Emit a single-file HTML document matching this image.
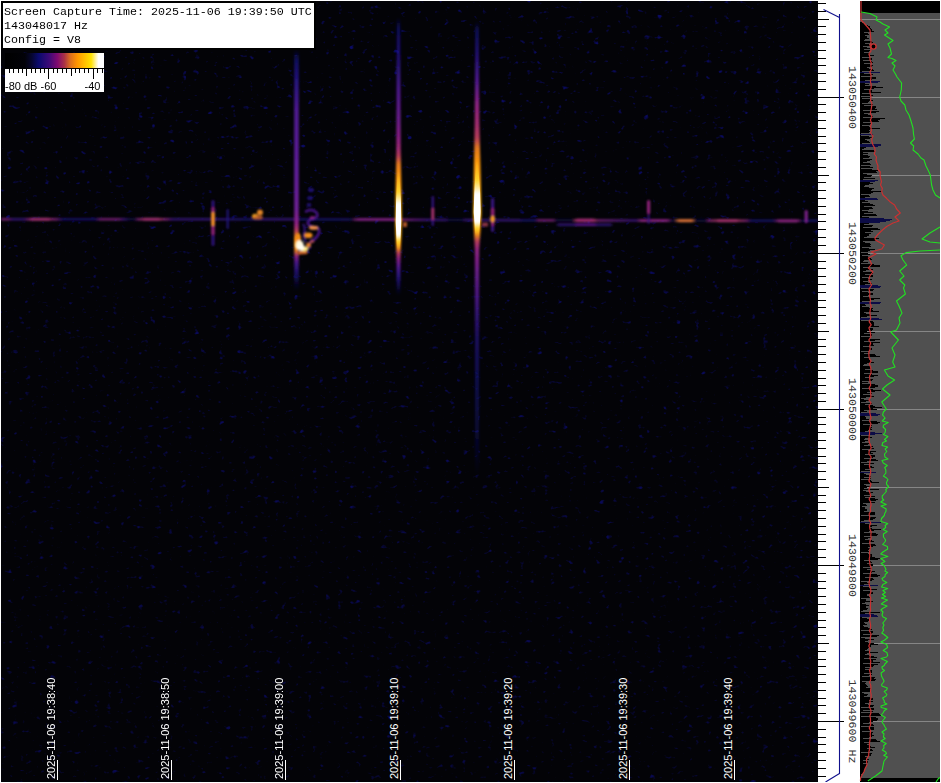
<!DOCTYPE html>
<html lang="en"><head><meta charset="utf-8"><title>Spectrogram capture</title>
<style>
html,body{margin:0;padding:0;background:#fff;}
body{width:941px;height:783px;overflow:hidden;position:relative;}
svg{position:absolute;left:0;top:0;display:block;}
.mono{font-family:"Liberation Mono","Courier New",monospace;font-size:11.67px;fill:#000;}
.sans{font-family:"Liberation Sans",Arial,sans-serif;font-size:11px;}
</style></head><body>
<svg width="941" height="783" viewBox="0 0 941 783">
<defs>
<filter id="noise" x="0" y="0" width="100%" height="100%" color-interpolation-filters="sRGB">
<feTurbulence type="fractalNoise" baseFrequency="0.16 0.2" numOctaves="2" seed="11" result="t"/>
<feColorMatrix in="t" type="matrix" values="0 0 0 0 0.04  0 0 0 0 0.04  0 0 0 0 0.4  5 0 0 0 -3.38"/>
</filter>
<filter id="b1" x="-50%" y="-5%" width="200%" height="110%"><feGaussianBlur stdDeviation="1.1 1.5"/></filter>
<filter id="b2" x="-50%" y="-20%" width="200%" height="140%"><feGaussianBlur stdDeviation="0.9"/></filter>
<filter id="b4" x="-50%" y="-20%" width="200%" height="140%"><feGaussianBlur stdDeviation="0.55 0.9"/></filter>
<filter id="b3" x="-20%" y="-100%" width="140%" height="300%"><feGaussianBlur stdDeviation="1.4 0.8"/></filter>
<linearGradient id="fade" x1="0" y1="0" x2="0" y2="1"><stop offset="0" stop-color="#030307" stop-opacity="0"/><stop offset="0.45" stop-color="#030307" stop-opacity="0.15"/><stop offset="1" stop-color="#030307" stop-opacity="0.25"/></linearGradient>
<linearGradient id="cbar" x1="0" y1="0" x2="1" y2="0"><stop offset="0" stop-color="#000000"/><stop offset="0.2" stop-color="#020208"/><stop offset="0.27" stop-color="#060630"/><stop offset="0.34" stop-color="#0a0a6e"/><stop offset="0.445" stop-color="#3c0a78"/><stop offset="0.53" stop-color="#800a70"/><stop offset="0.6" stop-color="#aa3246"/><stop offset="0.66" stop-color="#dc6e1e"/><stop offset="0.73" stop-color="#ff9600"/><stop offset="0.87" stop-color="#ffe100"/><stop offset="0.92" stop-color="#fff4b0"/><stop offset="0.945" stop-color="#ffffff"/><stop offset="1" stop-color="#ffffff"/></linearGradient>
<linearGradient id="s1" gradientUnits="userSpaceOnUse" x1="0" y1="50" x2="0" y2="290"><stop offset="0.0000" stop-color="#14148a" stop-opacity="0"/><stop offset="0.0417" stop-color="#14148a" stop-opacity="0.65"/><stop offset="0.1250" stop-color="#2a1490" stop-opacity="0.85"/><stop offset="0.2500" stop-color="#521a96" stop-opacity="0.95"/><stop offset="0.5000" stop-color="#5e1e98" stop-opacity="1"/><stop offset="0.6667" stop-color="#6c2092" stop-opacity="1"/><stop offset="0.7250" stop-color="#8c2080" stop-opacity="1"/><stop offset="0.7542" stop-color="#b43c58" stop-opacity="1"/><stop offset="0.7750" stop-color="#e07820" stop-opacity="1"/><stop offset="0.8000" stop-color="#ff9a08" stop-opacity="1"/><stop offset="0.8375" stop-color="#e07820" stop-opacity="1"/><stop offset="0.8583" stop-color="#8c2080" stop-opacity="0.95"/><stop offset="0.8833" stop-color="#521a96" stop-opacity="0.9"/><stop offset="0.9250" stop-color="#2a1490" stop-opacity="0.7"/><stop offset="1.0000" stop-color="#14148a" stop-opacity="0"/></linearGradient>
<linearGradient id="s2" gradientUnits="userSpaceOnUse" x1="0" y1="18" x2="0" y2="295"><stop offset="0.0000" stop-color="#14148a" stop-opacity="0"/><stop offset="0.0361" stop-color="#14148a" stop-opacity="0.6"/><stop offset="0.1516" stop-color="#2a1490" stop-opacity="0.75"/><stop offset="0.2599" stop-color="#521a96" stop-opacity="0.9"/><stop offset="0.3755" stop-color="#6c1c88" stop-opacity="1"/><stop offset="0.4404" stop-color="#8c2080" stop-opacity="1"/><stop offset="0.4765" stop-color="#a02c6c" stop-opacity="1"/><stop offset="0.4982" stop-color="#b43c58" stop-opacity="1"/><stop offset="0.5271" stop-color="#e07820" stop-opacity="1"/><stop offset="0.5921" stop-color="#ff9a08" stop-opacity="1"/><stop offset="0.6751" stop-color="#ffb010" stop-opacity="1"/><stop offset="0.7870" stop-color="#ffb010" stop-opacity="1"/><stop offset="0.8123" stop-color="#ff9a08" stop-opacity="1"/><stop offset="0.8339" stop-color="#e07820" stop-opacity="1"/><stop offset="0.8484" stop-color="#b43c58" stop-opacity="1"/><stop offset="0.8664" stop-color="#8c2080" stop-opacity="1"/><stop offset="0.8989" stop-color="#521a96" stop-opacity="0.95"/><stop offset="0.9386" stop-color="#2a1490" stop-opacity="0.8"/><stop offset="1.0000" stop-color="#14148a" stop-opacity="0"/></linearGradient>
<linearGradient id="c2" gradientUnits="userSpaceOnUse" x1="0" y1="170" x2="0" y2="250"><stop offset="0.0000" stop-color="#ffd830" stop-opacity="0"/><stop offset="0.2750" stop-color="#ffd830" stop-opacity="0.9"/><stop offset="0.4250" stop-color="#ffffff" stop-opacity="1"/><stop offset="0.8125" stop-color="#ffffff" stop-opacity="1"/><stop offset="0.8875" stop-color="#ffd830" stop-opacity="0.9"/><stop offset="1.0000" stop-color="#ffd830" stop-opacity="0"/></linearGradient>
<linearGradient id="s3" gradientUnits="userSpaceOnUse" x1="0" y1="22" x2="0" y2="475"><stop offset="0.0000" stop-color="#14148a" stop-opacity="0"/><stop offset="0.0177" stop-color="#14148a" stop-opacity="0.6"/><stop offset="0.0728" stop-color="#2a1490" stop-opacity="0.75"/><stop offset="0.1280" stop-color="#521a96" stop-opacity="0.9"/><stop offset="0.1832" stop-color="#8c2080" stop-opacity="1"/><stop offset="0.2274" stop-color="#a02c6c" stop-opacity="1"/><stop offset="0.2561" stop-color="#b43c58" stop-opacity="1"/><stop offset="0.2781" stop-color="#e07820" stop-opacity="1"/><stop offset="0.3157" stop-color="#ff9a08" stop-opacity="1"/><stop offset="0.3819" stop-color="#ffb010" stop-opacity="1"/><stop offset="0.4459" stop-color="#ffb010" stop-opacity="1"/><stop offset="0.4592" stop-color="#ff9a08" stop-opacity="1"/><stop offset="0.4724" stop-color="#e07820" stop-opacity="1"/><stop offset="0.4834" stop-color="#b43c58" stop-opacity="1"/><stop offset="0.5033" stop-color="#8c2080" stop-opacity="1"/><stop offset="0.5519" stop-color="#6a1c88" stop-opacity="0.95"/><stop offset="0.6137" stop-color="#521a96" stop-opacity="0.8"/><stop offset="0.6909" stop-color="#2a1490" stop-opacity="0.62"/><stop offset="0.8124" stop-color="#14148a" stop-opacity="0.48"/><stop offset="0.9227" stop-color="#14148a" stop-opacity="0.28"/><stop offset="1.0000" stop-color="#14148a" stop-opacity="0"/></linearGradient>
<linearGradient id="c3" gradientUnits="userSpaceOnUse" x1="0" y1="160" x2="0" y2="236"><stop offset="0.0000" stop-color="#ffd830" stop-opacity="0"/><stop offset="0.2632" stop-color="#ffd830" stop-opacity="0.9"/><stop offset="0.4474" stop-color="#ffffff" stop-opacity="1"/><stop offset="0.8158" stop-color="#ffffff" stop-opacity="1"/><stop offset="0.8947" stop-color="#ffd830" stop-opacity="0.9"/><stop offset="1.0000" stop-color="#ffd830" stop-opacity="0"/></linearGradient>
<linearGradient id="lg" gradientUnits="userSpaceOnUse" x1="1" y1="0" x2="818" y2="0"><stop offset="0.0000" stop-color="#862282"/><stop offset="0.0086" stop-color="#862282"/><stop offset="0.0135" stop-color="#3a1684"/><stop offset="0.0282" stop-color="#3a1684"/><stop offset="0.0330" stop-color="#862282"/><stop offset="0.0404" stop-color="#b03a6a"/><stop offset="0.0551" stop-color="#b03a6a"/><stop offset="0.0673" stop-color="#862282"/><stop offset="0.0747" stop-color="#1a1070"/><stop offset="0.1163" stop-color="#1a1070"/><stop offset="0.1212" stop-color="#862282"/><stop offset="0.1432" stop-color="#862282"/><stop offset="0.1506" stop-color="#3a1684"/><stop offset="0.1579" stop-color="#0c0a40"/><stop offset="0.1640" stop-color="#0c0a40"/><stop offset="0.1677" stop-color="#862282"/><stop offset="0.1750" stop-color="#b03a6a"/><stop offset="0.1946" stop-color="#b03a6a"/><stop offset="0.2032" stop-color="#862282"/><stop offset="0.2093" stop-color="#3a1684"/><stop offset="0.2534" stop-color="#3a1684"/><stop offset="0.3011" stop-color="#1a1070"/><stop offset="0.3231" stop-color="#3a1684"/><stop offset="0.3586" stop-color="#3a1684"/><stop offset="0.3660" stop-color="#1a1070"/><stop offset="0.3917" stop-color="#1a1070"/><stop offset="0.4259" stop-color="#1a1070"/><stop offset="0.4296" stop-color="#0c0a40"/><stop offset="0.4333" stop-color="#862282"/><stop offset="0.4835" stop-color="#862282"/><stop offset="0.4908" stop-color="#862282"/><stop offset="0.5251" stop-color="#3a1684"/><stop offset="0.5447" stop-color="#3a1684"/><stop offset="0.5483" stop-color="#0c0a40"/><stop offset="0.5643" stop-color="#0c0a40"/><stop offset="0.5679" stop-color="#3a1684"/><stop offset="0.6340" stop-color="#3a1684"/><stop offset="0.6377" stop-color="#1a1070"/><stop offset="0.6548" stop-color="#1a1070"/><stop offset="0.6573" stop-color="#862282"/><stop offset="0.6756" stop-color="#862282"/><stop offset="0.6793" stop-color="#0c0a40"/><stop offset="0.7001" stop-color="#0c0a40"/><stop offset="0.7026" stop-color="#b03a6a"/><stop offset="0.7271" stop-color="#b03a6a"/><stop offset="0.7307" stop-color="#862282"/><stop offset="0.7772" stop-color="#3a1684"/><stop offset="0.7821" stop-color="#862282"/><stop offset="0.8176" stop-color="#862282"/><stop offset="0.8201" stop-color="#0c0a40"/><stop offset="0.8250" stop-color="#0c0a40"/><stop offset="0.8274" stop-color="#e0703a"/><stop offset="0.8470" stop-color="#e0703a"/><stop offset="0.8494" stop-color="#0c0a40"/><stop offset="0.8629" stop-color="#0c0a40"/><stop offset="0.8654" stop-color="#862282"/><stop offset="0.8764" stop-color="#b03a6a"/><stop offset="0.9021" stop-color="#b03a6a"/><stop offset="0.9131" stop-color="#862282"/><stop offset="0.9168" stop-color="#1a1070"/><stop offset="0.9461" stop-color="#1a1070"/><stop offset="0.9498" stop-color="#862282"/><stop offset="0.9767" stop-color="#862282"/><stop offset="0.9792" stop-color="#0c0a40"/><stop offset="0.9878" stop-color="#1a1070"/><stop offset="1.0000" stop-color="#1a1070"/></linearGradient>
</defs>
<rect x="0" y="0" width="941" height="783" fill="#fff"/>
<rect x="1" y="1" width="817" height="781" fill="#030307"/>
<rect x="1" y="1" width="817" height="781" filter="url(#noise)"/>
<rect x="1" y="1" width="817" height="781" fill="url(#fade)"/>
<g filter="url(#b3)">
<path d="M1 219.5 L300 219.5 L520 220.4 L818 221 L818 218.5 L520 217.9 L300 217 L1 217 Z" transform="translate(0,1.1)" fill="url(#lg)" opacity="0.8"/>
<rect x="30" y="217.8" width="20" height="3" rx="1.2" fill="#a02c74" opacity="0.78"/>
<rect x="143" y="217.8" width="17" height="3" rx="1.2" fill="#a02c74" opacity="0.78"/>
<rect x="357" y="218.0" width="39" height="2.8" rx="1.2" fill="#7c2080" opacity="0.78"/>
<rect x="576" y="218.60000000000002" width="19" height="3.4" rx="1.2" fill="#a42a76" opacity="0.78"/>
<rect x="640" y="219.2" width="28" height="2.8" rx="1.2" fill="#8c2280" opacity="0.78"/>
<rect x="678" y="219.2" width="15" height="3" rx="1.2" fill="#e67838" opacity="0.78"/>
<rect x="717" y="219.3" width="21" height="3" rx="1.2" fill="#a83070" opacity="0.78"/>
<rect x="778" y="219.6" width="20" height="2.8" rx="1.2" fill="#8c2280" opacity="0.78"/>
<rect x="557" y="223.6" width="55" height="2.4" rx="1" fill="#34147e" opacity="0.85"/>
<rect x="575" y="223.6" width="21" height="2.4" rx="1" fill="#5c1a88" opacity="0.9"/>
</g>
<g filter="url(#b1)">
<rect x="294.2" y="50" width="4.6" height="240" fill="url(#s1)"/>
<path d="M396.8 18 L400.2 18 L400.7 150 L401.6 200 L401.8 225 L401 245 L400.5 258 L400.4 295 L396.6 295 L396.5 258 L396 245 L395.2 225 L395.4 200 L396.3 150 Z" fill="url(#s2)"/>
<path d="M475.3 22 L478.7 22 L479.3 120 L481 190 L481.4 213 L480.4 232 L479.2 250 L479 475 L475 475 L474.8 250 L474 232 L473.1 213 L473.5 190 L474.7 120 Z" fill="url(#s3)"/>
</g>
<g filter="url(#b4)">
<path d="M397.6 170 L399.4 170 L400.9 200 L401.3 222 L400 250 L397 250 L395.7 222 L396.1 200 Z" fill="url(#c2)"/>
<path d="M476.2 160 L477.8 160 L480.1 192 L480.7 212 L479 236 L475.4 236 L473.7 212 L474.3 192 Z" fill="url(#c3)"/>
</g>
<g filter="url(#b2)">
<path d="M305 212 q6 -4 11 0 q4 5 -3 7 q-6 1 -5 5 q4 4 9 3 q4 3 1 8 q-3 5 -7 6 q-3 4 -1 8" fill="none" stroke="#4a168c" stroke-width="2.6" opacity="0.95"/>
<path d="M303 224 q3 4 1 9 q-1 5 2 9" fill="none" stroke="#3a148a" stroke-width="2.2" opacity="0.85"/>
<path d="M310 217.5 q3 1 4 -1" fill="none" stroke="#8c2080" stroke-width="2.4"/>
<ellipse cx="311" cy="190" rx="3" ry="2" fill="#24148a" opacity="0.85"/>
<ellipse cx="310" cy="198" rx="3" ry="2" fill="#24148a" opacity="0.8"/>
<ellipse cx="309" cy="205" rx="2.5" ry="2" fill="#24148a" opacity="0.8"/>
<ellipse cx="313.5" cy="227.8" rx="4.6" ry="2" fill="#e88a48"/>
<ellipse cx="308.3" cy="235.2" rx="4.2" ry="2.8" fill="#f08c1c"/>
<ellipse cx="308.5" cy="245" rx="2.6" ry="2.2" fill="#e07a24"/>
<ellipse cx="312" cy="241.5" rx="2.2" ry="1.6" fill="#b04a50"/>
<ellipse cx="298.2" cy="240" rx="2.8" ry="7" fill="#f08c14"/>
<path d="M298 251 L308 251.5 L307 254 L298 254.5 Z" fill="#d8682c"/>
<ellipse cx="299.5" cy="245.3" rx="4.2" ry="5" fill="#fff8dc"/>
<ellipse cx="304" cy="248.8" rx="4.2" ry="2.6" fill="#ffe680"/>
<ellipse cx="301" cy="247.5" rx="3.4" ry="3" fill="#fffdf0"/>
<rect x="211.5" y="200" width="3" height="46" rx="1.5" fill="#30127e" opacity="0.95"/>
<rect x="211.3" y="207" width="3.4" height="28" rx="1.5" fill="#8c2070"/>
<rect x="211.2" y="212" width="3.6" height="14" rx="1.5" fill="#f09020"/>
<rect x="226.5" y="209" width="2.4" height="20" rx="1" fill="#20107a" opacity="0.9"/>
<ellipse cx="255" cy="216.5" rx="3" ry="2.8" fill="#f0a020"/>
<ellipse cx="260" cy="212.5" rx="3" ry="3" fill="#e08428"/>
<ellipse cx="258" cy="217.5" rx="5" ry="2" fill="#c0602c" opacity="0.9"/>
<rect x="403" y="222" width="4" height="5" fill="#c0602c" opacity="0.9"/>
<rect x="431.5" y="196" width="2.6" height="30" rx="1" fill="#30127e" opacity="0.9"/>
<rect x="431.3" y="208" width="3" height="12" rx="1" fill="#a03068"/>
<rect x="491" y="198" width="3.2" height="34" rx="1.5" fill="#3a1482" opacity="0.95"/>
<rect x="490.8" y="208" width="3.6" height="18" rx="1.5" fill="#8c2070"/>
<ellipse cx="492.6" cy="219" rx="2.4" ry="3.2" fill="#f09828"/>
<rect x="482" y="222.5" width="6" height="4" fill="#a03c50" opacity="0.85"/>
<rect x="647" y="200" width="3.2" height="14" rx="1.5" fill="#8c2078"/>
<rect x="647.4" y="214" width="2.4" height="10" rx="1" fill="#30127e" opacity="0.8"/>
<rect x="804.6" y="210" width="3.2" height="13" rx="1.5" fill="#7a2088"/>
</g>
<rect x="1" y="1" width="315" height="49" fill="#000"/>
<rect x="3" y="3" width="311" height="45" fill="#fff"/>
<text class="mono" x="4" y="15" xml:space="preserve">Screen Capture Time: 2025-11-06 19:39:50 UTC</text>
<text class="mono" x="4" y="29">143048017 Hz</text>
<text class="mono" x="4" y="43">Config = V8</text>
<rect x="5" y="53" width="99" height="39" fill="#000"/>
<rect x="5" y="53" width="99" height="15" fill="url(#cbar)"/>
<rect x="5" y="69" width="99" height="23" fill="#fff"/>
<path d="M9.5 69v4 M13.5 69v4 M18.5 69v4 M22.5 69v4 M26.5 69v7 M31.5 69v4 M35.5 69v4 M40.5 69v4 M44.5 69v4 M48.5 69v10 M53.5 69v4 M57.5 69v4 M62.5 69v4 M66.5 69v4 M71.5 69v7 M75.5 69v4 M79.5 69v4 M84.5 69v4 M88.5 69v4 M93.5 69v10 M97.5 69v4 M102.5 69v4" stroke="#000" stroke-width="1" shape-rendering="crispEdges" fill="none"/>
<text class="sans" x="5" y="90" fill="#000" xml:space="preserve">-80 dB -60</text>
<text class="sans" x="84.5" y="90" fill="#000">-40</text>
<rect x="57" y="760" width="1" height="20" fill="#fff" shape-rendering="crispEdges"/>
<text class="sans" fill="#fff" transform="translate(55,779) rotate(-90)" xml:space="preserve">2025-11-06 19:38:40</text>
<rect x="171" y="760" width="1" height="20" fill="#fff" shape-rendering="crispEdges"/>
<text class="sans" fill="#fff" transform="translate(169,779) rotate(-90)" xml:space="preserve">2025-11-06 19:38:50</text>
<rect x="285" y="760" width="1" height="20" fill="#fff" shape-rendering="crispEdges"/>
<text class="sans" fill="#fff" transform="translate(283,779) rotate(-90)" xml:space="preserve">2025-11-06 19:39:00</text>
<rect x="400" y="760" width="1" height="20" fill="#fff" shape-rendering="crispEdges"/>
<text class="sans" fill="#fff" transform="translate(398,779) rotate(-90)" xml:space="preserve">2025-11-06 19:39:10</text>
<rect x="514" y="760" width="1" height="20" fill="#fff" shape-rendering="crispEdges"/>
<text class="sans" fill="#fff" transform="translate(512,779) rotate(-90)" xml:space="preserve">2025-11-06 19:39:20</text>
<rect x="629" y="760" width="1" height="20" fill="#fff" shape-rendering="crispEdges"/>
<text class="sans" fill="#fff" transform="translate(627,779) rotate(-90)" xml:space="preserve">2025-11-06 19:39:30</text>
<rect x="734" y="760" width="1" height="20" fill="#fff" shape-rendering="crispEdges"/>
<text class="sans" fill="#fff" transform="translate(732,779) rotate(-90)" xml:space="preserve">2025-11-06 19:39:40</text>
<rect x="818" y="1" width="42" height="781" fill="#fff"/>
<path d="M818 3.5h8 M818 11.5h8 M818 19.5h11 M818 26.5h8 M818 34.5h8 M818 42.5h8 M818 50.5h8 M818 58.5h8 M818 65.5h8 M818 73.5h8 M818 81.5h8 M818 89.5h8 M818 97.5h26 M818 104.5h8 M818 112.5h8 M818 120.5h8 M818 128.5h8 M818 136.5h8 M818 143.5h8 M818 151.5h8 M818 159.5h8 M818 167.5h8 M818 175.5h11 M818 182.5h8 M818 190.5h8 M818 198.5h8 M818 206.5h8 M818 214.5h8 M818 221.5h8 M818 229.5h8 M818 237.5h8 M818 245.5h8 M818 253.5h26 M818 261.5h8 M818 268.5h8 M818 276.5h8 M818 284.5h8 M818 292.5h8 M818 300.5h8 M818 307.5h8 M818 315.5h8 M818 323.5h8 M818 331.5h11 M818 339.5h8 M818 346.5h8 M818 354.5h8 M818 362.5h8 M818 370.5h8 M818 378.5h8 M818 385.5h8 M818 393.5h8 M818 401.5h8 M818 409.5h26 M818 417.5h8 M818 424.5h8 M818 432.5h8 M818 440.5h8 M818 448.5h8 M818 456.5h8 M818 463.5h8 M818 471.5h8 M818 479.5h8 M818 487.5h11 M818 495.5h8 M818 502.5h8 M818 510.5h8 M818 518.5h8 M818 526.5h8 M818 534.5h8 M818 541.5h8 M818 549.5h8 M818 557.5h8 M818 565.5h26 M818 573.5h8 M818 581.5h8 M818 588.5h8 M818 596.5h8 M818 604.5h8 M818 612.5h8 M818 620.5h8 M818 627.5h8 M818 635.5h8 M818 643.5h11 M818 651.5h8 M818 659.5h8 M818 666.5h8 M818 674.5h8 M818 682.5h8 M818 690.5h8 M818 698.5h8 M818 705.5h8 M818 713.5h8 M818 721.5h26 M818 729.5h8 M818 737.5h8 M818 744.5h8 M818 752.5h8 M818 760.5h8 M818 768.5h8 M818 776.5h8" stroke="#000" stroke-width="1" shape-rendering="crispEdges" fill="none"/>
<path d="M823.5 9.5 L839.5 17.5 M839.5 14 V774 M839.5 773.5 L825.5 782" stroke="#10108c" stroke-width="1.1" fill="none"/>
<text class="mono" fill="#363636" style="fill:#363636" text-anchor="middle" transform="translate(848.6,97.5) rotate(90)" xml:space="preserve">143050400</text>
<text class="mono" fill="#363636" style="fill:#363636" text-anchor="middle" transform="translate(848.6,253.5) rotate(90)" xml:space="preserve">143050200</text>
<text class="mono" fill="#363636" style="fill:#363636" text-anchor="middle" transform="translate(848.6,409.5) rotate(90)" xml:space="preserve">143050000</text>
<text class="mono" fill="#363636" style="fill:#363636" text-anchor="middle" transform="translate(848.6,565.5) rotate(90)" xml:space="preserve">143049800</text>
<text class="mono" fill="#363636" style="fill:#363636" text-anchor="middle" transform="translate(848.6,721.5) rotate(90)" xml:space="preserve">143049600 Hz</text>
<rect x="860" y="1" width="80" height="781" fill="#505050"/>
<rect x="860" y="1" width="80" height="12" fill="#000"/>
<rect x="860" y="778" width="80" height="4" fill="#000"/>
<path d="M860 19.5h80 M860 97.5h80 M860 175.5h80 M860 253.5h80 M860 331.5h80 M860 409.5h80 M860 487.5h80 M860 565.5h80 M860 643.5h80 M860 721.5h80" stroke="#868686" stroke-width="1" shape-rendering="crispEdges" fill="none"/>
<path d="M860 22.5h2 M860 23.5h4 M860 24.5h5 M860 25.5h8 M860 26.5h10 M860 27.5h10 M860 28.5h11 M860 29.5h12 M860 30.5h12 M860 31.5h14 M860 32.5h4 M860 33.5h8 M860 34.5h9 M860 35.5h5 M860 36.5h7 M860 37.5h7 M860 38.5h9 M860 39.5h5 M860 40.5h4 M860 41.5h12 M860 42.5h13 M860 43.5h5 M860 44.5h9 M860 45.5h10 M860 46.5h3 M860 47.5h7 M860 48.5h11 M860 49.5h4 M860 50.5h10 M860 51.5h9 M860 52.5h4 M860 53.5h10 M860 54.5h9 M860 55.5h14 M860 56.5h10 M860 57.5h2 M860 58.5h12 M860 59.5h12 M860 60.5h3 M860 61.5h12 M860 62.5h13 M860 63.5h4 M860 64.5h10 M860 65.5h13 M860 66.5h12 M860 67.5h7 M860 68.5h9 M860 69.5h13 M860 70.5h14 M860 71.5h2 M860 73.5h4 M860 74.5h13 M860 75.5h11 M860 76.5h1 M860 77.5h16 M860 78.5h16 M860 79.5h12 M860 80.5h5 M860 83.5h5 M860 84.5h9 M860 85.5h5 M860 86.5h16 M860 87.5h23 M860 88.5h14 M860 89.5h4 M860 90.5h12 M860 91.5h12 M860 92.5h21 M860 93.5h2 M860 94.5h11 M860 95.5h13 M860 96.5h1 M860 97.5h10 M860 98.5h2 M860 99.5h10 M860 100.5h13 M860 101.5h9 M860 102.5h8 M860 103.5h2 M860 104.5h13 M860 105.5h4 M860 106.5h16 M860 107.5h16 M860 108.5h15 M860 109.5h17 M860 110.5h3 M860 111.5h19 M860 112.5h16 M860 113.5h4 M860 114.5h8 M860 115.5h11 M860 116.5h13 M860 117.5h3 M860 118.5h25 M860 119.5h20 M860 120.5h18 M860 121.5h19 M860 122.5h3 M860 123.5h11 M860 124.5h10 M860 125.5h2 M860 126.5h9 M860 127.5h11 M860 128.5h20 M860 129.5h10 M860 130.5h9 M860 131.5h10 M860 132.5h9 M860 133.5h1 M860 135.5h1 M860 136.5h9 M860 137.5h13 M860 138.5h10 M860 139.5h5 M860 140.5h7 M860 141.5h9 M860 142.5h10 M860 143.5h2 M860 147.5h6 M860 148.5h4 M860 149.5h2 M860 150.5h14 M860 151.5h15 M860 152.5h3 M860 153.5h8 M860 154.5h3 M860 155.5h8 M860 156.5h10 M860 157.5h9 M860 158.5h3 M860 159.5h12 M860 160.5h10 M860 161.5h7 M860 162.5h3 M860 163.5h10 M860 164.5h11 M860 165.5h1 M860 166.5h10 M860 167.5h13 M860 168.5h1 M860 169.5h12 M860 170.5h18 M860 171.5h16 M860 172.5h17 M860 173.5h3 M860 174.5h7 M860 175.5h12 M860 176.5h11 M860 177.5h4 M860 178.5h15 M860 179.5h3 M860 182.5h10 M860 183.5h13 M860 184.5h9 M860 185.5h5 M860 186.5h4 M860 187.5h9 M860 188.5h14 M860 189.5h12 M860 190.5h11 M860 191.5h22 M860 192.5h13 M860 193.5h11 M860 194.5h1 M860 195.5h9 M860 196.5h10 M860 197.5h5 M860 200.5h5 M860 201.5h8 M860 202.5h2 M860 203.5h10 M860 204.5h13 M860 205.5h15 M860 206.5h4 M860 207.5h12 M860 208.5h13 M860 209.5h9 M860 210.5h2 M860 211.5h8 M860 212.5h13 M860 213.5h4 M860 214.5h16 M860 215.5h17 M860 216.5h2 M860 217.5h9 M860 223.5h9 M860 224.5h4 M860 225.5h13 M860 226.5h12 M860 227.5h3 M860 228.5h18 M860 229.5h20 M860 230.5h11 M860 231.5h13 M860 232.5h5 M860 233.5h11 M860 234.5h9 M860 235.5h9 M860 236.5h7 M860 237.5h4 M860 238.5h19 M860 239.5h15 M860 240.5h17 M860 241.5h3 M860 242.5h5 M860 243.5h10 M860 244.5h11 M860 245.5h10 M860 246.5h11 M860 247.5h2 M860 248.5h9 M860 249.5h15 M860 250.5h10 M860 251.5h8 M860 252.5h1 M860 253.5h8 M860 254.5h10 M860 255.5h2 M860 256.5h8 M860 257.5h10 M860 258.5h11 M860 259.5h12 M860 260.5h4 M860 261.5h3 M860 262.5h8 M860 263.5h1 M860 264.5h14 M860 265.5h20 M860 266.5h20 M860 267.5h3 M860 268.5h10 M860 269.5h13 M860 270.5h6 M860 271.5h3 M860 272.5h12 M860 273.5h13 M860 274.5h5 M860 275.5h13 M860 276.5h13 M860 277.5h2 M860 278.5h8 M860 279.5h12 M860 280.5h8 M860 281.5h3 M860 282.5h8 M860 283.5h12 M860 284.5h5 M860 288.5h1 M860 289.5h14 M860 290.5h13 M860 291.5h2 M860 292.5h8 M860 293.5h13 M860 294.5h13 M860 295.5h8 M860 296.5h3 M860 297.5h10 M860 298.5h20 M860 299.5h14 M860 300.5h11 M860 301.5h2 M860 304.5h5 M860 305.5h6 M860 306.5h2 M860 307.5h9 M860 308.5h13 M860 309.5h12 M860 310.5h13 M860 311.5h19 M860 312.5h4 M860 313.5h6 M860 314.5h10 M860 315.5h17 M860 316.5h7 M860 317.5h1 M860 320.5h1 M860 321.5h13 M860 322.5h14 M860 323.5h14 M860 324.5h14 M860 325.5h14 M860 326.5h19 M860 327.5h9 M860 328.5h13 M860 329.5h13 M860 330.5h12 M860 331.5h7 M860 332.5h15 M860 333.5h4 M860 334.5h12 M860 335.5h12 M860 336.5h1 M860 337.5h11 M860 338.5h10 M860 339.5h20 M860 340.5h15 M860 341.5h4 M860 342.5h20 M860 343.5h13 M860 344.5h13 M860 345.5h14 M860 346.5h3 M860 347.5h10 M860 348.5h12 M860 349.5h12 M860 350.5h10 M860 351.5h1 M860 352.5h9 M860 353.5h4 M860 354.5h15 M860 355.5h16 M860 356.5h20 M860 357.5h4 M860 358.5h10 M860 359.5h9 M860 360.5h10 M860 361.5h11 M860 362.5h14 M860 363.5h7 M860 364.5h4 M860 365.5h3 M860 366.5h11 M860 367.5h11 M860 368.5h11 M860 369.5h5 M860 370.5h13 M860 371.5h18 M860 372.5h18 M860 373.5h4 M860 374.5h12 M860 375.5h18 M860 376.5h14 M860 377.5h5 M860 378.5h10 M860 379.5h13 M860 380.5h12 M860 381.5h2 M860 382.5h8 M860 383.5h2 M860 384.5h15 M860 385.5h18 M860 386.5h18 M860 387.5h15 M860 388.5h2 M860 389.5h13 M860 390.5h21 M860 391.5h15 M860 392.5h7 M860 393.5h12 M860 394.5h3 M860 395.5h11 M860 396.5h14 M860 397.5h6 M860 398.5h1 M860 399.5h4 M860 400.5h9 M860 401.5h6 M860 402.5h1 M860 403.5h12 M860 404.5h5 M860 405.5h13 M860 406.5h15 M860 407.5h22 M860 408.5h13 M860 409.5h17 M860 410.5h4 M860 411.5h7 M860 412.5h1 M860 416.5h5 M860 417.5h6 M860 418.5h6 M860 419.5h9 M860 420.5h2 M860 421.5h17 M860 422.5h20 M860 423.5h18 M860 424.5h3 M860 425.5h12 M860 426.5h10 M860 427.5h12 M860 428.5h11 M860 429.5h12 M860 430.5h8 M860 431.5h5 M860 435.5h1 M860 436.5h10 M860 437.5h12 M860 438.5h5 M860 439.5h4 M860 440.5h8 M860 441.5h5 M860 442.5h2 M860 443.5h10 M860 444.5h8 M860 445.5h4 M860 446.5h13 M860 447.5h11 M860 448.5h14 M860 449.5h2 M860 450.5h8 M860 451.5h16 M860 452.5h11 M860 453.5h13 M860 454.5h5 M860 455.5h15 M860 456.5h15 M860 457.5h13 M860 458.5h4 M860 459.5h16 M860 460.5h18 M860 461.5h7 M860 462.5h1 M860 463.5h14 M860 464.5h4 M860 465.5h10 M860 466.5h12 M860 467.5h14 M860 468.5h10 M860 469.5h5 M860 470.5h11 M860 471.5h1 M860 473.5h4 M860 474.5h6 M860 475.5h9 M860 476.5h11 M860 477.5h4 M860 478.5h11 M860 479.5h1 M860 480.5h11 M860 481.5h12 M860 482.5h19 M860 483.5h10 M860 484.5h4 M860 485.5h6 M860 486.5h10 M860 487.5h7 M860 488.5h4 M860 489.5h19 M860 490.5h3 M860 491.5h6 M860 492.5h13 M860 493.5h11 M860 494.5h11 M860 495.5h4 M860 496.5h15 M860 497.5h5 M860 498.5h15 M860 499.5h18 M860 500.5h16 M860 501.5h10 M860 502.5h15 M860 503.5h3 M860 504.5h6 M860 505.5h7 M860 506.5h2 M860 507.5h5 M860 508.5h5 M860 509.5h7 M860 510.5h7 M860 511.5h4 M860 512.5h15 M860 513.5h15 M860 514.5h15 M860 515.5h1 M860 516.5h9 M860 517.5h16 M860 518.5h15 M860 519.5h13 M860 520.5h4 M860 521.5h1 M860 523.5h5 M860 524.5h9 M860 525.5h17 M860 526.5h12 M860 527.5h10 M860 528.5h12 M860 529.5h21 M860 530.5h14 M860 531.5h9 M860 532.5h4 M860 533.5h16 M860 534.5h18 M860 535.5h17 M860 536.5h4 M860 537.5h11 M860 538.5h8 M860 539.5h5 M860 540.5h12 M860 541.5h14 M860 542.5h9 M860 543.5h2 M860 544.5h15 M860 545.5h16 M860 546.5h13 M860 547.5h8 M860 548.5h11 M860 549.5h9 M860 550.5h8 M860 551.5h9 M860 552.5h1 M860 553.5h8 M860 554.5h12 M860 555.5h12 M860 556.5h12 M860 557.5h15 M860 558.5h20 M860 559.5h18 M860 560.5h4 M860 561.5h11 M860 562.5h12 M860 563.5h7 M860 564.5h13 M860 565.5h13 M860 566.5h10 M860 567.5h3 M860 568.5h12 M860 569.5h7 M860 570.5h11 M860 571.5h15 M860 572.5h12 M860 573.5h3 M860 574.5h17 M860 575.5h20 M860 576.5h18 M860 577.5h5 M860 578.5h13 M860 579.5h14 M860 580.5h12 M860 581.5h1 M860 582.5h7 M860 583.5h10 M860 584.5h4 M860 586.5h3 M860 587.5h9 M860 588.5h11 M860 589.5h17 M860 590.5h3 M860 591.5h10 M860 592.5h13 M860 593.5h13 M860 594.5h7 M860 595.5h7 M860 596.5h9 M860 597.5h10 M860 598.5h1 M860 599.5h6 M860 600.5h6 M860 601.5h13 M860 602.5h5 M860 603.5h2 M860 604.5h6 M860 605.5h9 M860 606.5h6 M860 607.5h6 M860 608.5h8 M860 609.5h7 M860 610.5h3 M860 611.5h1 M860 612.5h20 M860 613.5h5 M860 617.5h2 M860 618.5h7 M860 619.5h10 M860 620.5h9 M860 621.5h8 M860 622.5h4 M860 623.5h5 M860 624.5h7 M860 625.5h3 M860 626.5h4 M860 627.5h8 M860 628.5h10 M860 629.5h12 M860 630.5h1 M860 631.5h13 M860 632.5h13 M860 633.5h12 M860 634.5h3 M860 635.5h19 M860 636.5h17 M860 637.5h1 M860 638.5h5 M860 639.5h14 M860 640.5h8 M860 641.5h5 M860 642.5h8 M860 643.5h14 M860 644.5h18 M860 645.5h11 M860 646.5h11 M860 647.5h10 M860 648.5h8 M860 649.5h7 M860 650.5h5 M860 651.5h9 M860 652.5h18 M860 653.5h7 M860 654.5h5 M860 655.5h9 M860 656.5h14 M860 657.5h17 M860 658.5h4 M860 659.5h16 M860 660.5h13 M860 661.5h13 M860 662.5h20 M860 663.5h3 M860 664.5h18 M860 665.5h14 M860 666.5h13 M860 667.5h5 M860 668.5h11 M860 669.5h5 M860 670.5h12 M860 671.5h12 M860 672.5h12 M860 673.5h4 M860 674.5h12 M860 675.5h9 M860 676.5h2 M860 677.5h15 M860 678.5h14 M860 679.5h16 M860 680.5h15 M860 681.5h2 M860 682.5h6 M860 683.5h5 M860 684.5h6 M860 685.5h7 M860 686.5h8 M860 687.5h6 M860 688.5h11 M860 689.5h10 M860 690.5h11 M860 691.5h10 M860 692.5h2 M860 693.5h4 M860 694.5h8 M860 695.5h7 M860 696.5h4 M860 697.5h10 M860 698.5h13 M860 699.5h13 M860 700.5h9 M860 701.5h13 M860 702.5h9 M860 703.5h5 M860 704.5h8 M860 705.5h14 M860 706.5h13 M860 707.5h1 M860 708.5h14 M860 709.5h14 M860 710.5h3 M860 711.5h13 M860 712.5h1 M860 713.5h19 M860 714.5h20 M860 715.5h21 M860 716.5h1 M860 717.5h16 M860 718.5h18 M860 719.5h18 M860 720.5h17 M860 721.5h13 M860 722.5h9 M860 723.5h3 M860 724.5h13 M860 725.5h14 M860 726.5h1 M860 727.5h14 M860 728.5h14 M860 729.5h14 M860 730.5h10 M860 731.5h2 M860 732.5h13 M860 733.5h12 M860 734.5h12 M860 735.5h14 M860 736.5h12 M860 737.5h9 M860 738.5h3 M860 739.5h16 M860 740.5h17 M860 741.5h20 M860 742.5h4 M860 743.5h9 M860 744.5h7 M860 745.5h9 M860 746.5h11 M860 747.5h15 M860 748.5h7 M860 749.5h12 M860 750.5h13 M860 751.5h10 M860 752.5h1 M860 753.5h12 M860 754.5h11 M860 755.5h11 M860 756.5h5 M860 757.5h7 M860 758.5h7 M860 759.5h9 M860 760.5h3 M860 761.5h8 M860 762.5h8 M860 763.5h3 M860 764.5h7 M860 765.5h6 M860 766.5h6 M860 767.5h6 M860 768.5h5 M860 769.5h5 M860 770.5h4 M860 771.5h4 M860 772.5h3 M860 773.5h3 M860 774.5h1 M860 775.5h2 M860 776.5h1 M860 777.5h1" stroke="#000" stroke-width="1" shape-rendering="crispEdges" fill="none"/>
<path d="M860 72.5h20 M860 81.5h20 M860 82.5h18 M860 134.5h13 M860 144.5h21 M860 145.5h21 M860 146.5h18 M860 180.5h18 M860 181.5h15 M860 198.5h17 M860 199.5h18 M860 218.5h24 M860 219.5h32 M860 220.5h30 M860 221.5h26 M860 222.5h20 M860 285.5h18 M860 286.5h21 M860 287.5h20 M860 302.5h21 M860 303.5h20 M860 318.5h19 M860 319.5h22 M860 413.5h16 M860 414.5h20 M860 415.5h18 M860 432.5h15 M860 433.5h22 M860 434.5h15 M860 472.5h16 M860 522.5h21 M860 585.5h18 M860 614.5h14 M860 615.5h17 M860 616.5h18" stroke="#0c0c46" stroke-width="1" shape-rendering="crispEdges" fill="none"/>
<polyline fill="none" stroke="#c83232" stroke-width="1.2" stroke-linejoin="round" points="861.0,1.0 861.0,20.0 864.0,23.0 870.0,30.0 870.0,30.0 870.3,33.0 870.6,36.0 870.7,39.0 871.1,42.0 870.0,45.0 870.6,48.0 871.0,51.0 868.9,54.0 869.9,57.0 870.0,60.0 871.3,63.0 870.8,66.0 871.6,69.0 869.9,72.0 871.0,75.0 870.9,78.1 870.4,81.3 871.1,84.4 871.2,87.6 869.8,90.7 870.3,93.9 871.0,97.0 870.5,100.2 872.0,103.5 871.6,106.8 871.0,110.0 870.3,113.3 871.9,116.7 870.4,120.0 871.6,123.3 870.5,126.7 871.5,130.0 870.6,133.0 873.0,136.0 871.7,139.0 872.0,142.0 873.0,145.0 874.8,148.0 875.1,151.0 874.3,154.0 876.5,157.0 876.0,160.0 876.9,163.0 878.0,166.0 877.7,169.0 880.3,172.0 880.0,175.0 880.6,178.3 881.5,181.7 880.5,185.0 882.3,188.3 881.7,191.7 883.0,195.0 886.5,198.3 889.9,201.7 894.6,205.0 896.6,209.0 900.3,213.0 895.0,217.0 899.0,221.0 893.0,223.0 886.7,226.5 882.5,230.0 878.3,234.0 875.0,238.0 875.4,240.0 884.4,245.0 881.8,249.0 871.0,252.0 876.0,254.0 868.4,258.0 870.2,261.0 871.6,264.0 868.4,268.0 873.0,272.0 869.8,276.0 869.0,280.0 871.6,285.0 869.0,289.0 869.9,292.7 869.6,296.3 870.5,300.0 870.0,303.1 871.2,306.2 870.3,309.3 869.9,312.4 870.2,315.5 870.7,318.6 869.1,321.7 871.2,324.8 868.9,327.9 870.0,331.0 870.6,334.0 870.8,337.0 868.8,340.0 870.7,343.0 869.7,346.0 870.2,349.0 868.8,352.0 868.9,355.0 869.2,358.0 871.1,361.0 869.3,364.0 870.6,367.0 871.0,370.0 871.1,373.0 869.6,376.0 869.7,379.0 870.1,382.0 870.7,385.0 869.1,388.0 870.6,391.0 870.7,394.0 870.9,397.0 868.9,400.0 871.1,403.0 869.0,406.0 870.0,409.0 869.6,412.0 870.3,415.0 871.0,418.0 869.6,421.0 871.0,424.0 870.1,427.0 869.5,430.0 869.6,433.0 869.2,436.0 869.0,439.0 869.2,442.0 870.5,445.0 871.2,448.0 869.2,451.0 868.9,454.0 871.2,457.0 870.1,460.0 869.8,463.0 869.4,466.0 870.2,469.0 870.8,472.0 869.9,475.0 869.8,478.0 868.9,481.0 871.0,484.0 870.0,487.0 868.9,490.0 870.0,493.0 870.8,496.0 869.1,499.0 870.6,502.0 871.1,505.0 870.3,508.0 870.7,511.0 869.1,514.0 869.8,517.0 869.2,520.0 870.8,523.0 869.5,526.0 869.9,529.0 871.2,532.0 870.8,535.0 871.1,538.0 869.9,541.0 870.0,544.0 870.6,547.0 869.9,550.0 869.5,553.0 869.8,556.0 869.2,559.0 869.7,562.0 870.0,565.0 871.2,568.0 871.1,571.0 870.3,574.0 870.0,577.0 869.6,580.0 869.0,583.0 869.5,586.0 870.7,589.0 870.9,592.0 869.7,595.0 870.7,598.0 870.7,601.0 870.5,604.0 870.4,607.0 870.6,610.0 869.7,613.0 870.5,616.0 869.5,619.0 870.0,622.0 870.6,625.0 870.5,628.0 869.5,631.0 871.1,634.0 870.4,637.0 870.2,640.0 870.0,643.0 868.8,646.0 870.1,649.1 869.4,652.1 870.4,655.1 869.9,658.2 870.8,661.2 870.4,664.2 870.7,667.2 869.6,670.3 870.3,673.3 870.6,676.3 870.8,679.4 869.6,682.4 870.8,685.4 870.9,688.5 870.5,691.5 871.1,694.5 871.1,697.6 870.0,700.6 870.1,703.6 869.2,706.7 870.8,709.7 871.0,712.7 869.9,715.8 870.5,718.8 870.5,721.8 870.6,724.8 869.2,727.9 870.7,730.9 870.2,733.9 870.4,737.0 870.0,740.0 869.4,743.1 869.5,746.2 869.5,749.4 868.8,752.5 868.7,755.6 866.6,758.8 866.6,761.9 867.0,765.0 865.2,768.3 864.0,771.7 862.0,775.0 860.6,778.0 860.5,781.0"/>
<circle cx="873.5" cy="46.5" r="2.6" fill="#000" stroke="#c83232" stroke-width="1.4"/>
<polyline fill="none" stroke="#22e022" stroke-width="1.1" stroke-linejoin="round" points="861.0,12.0 870.0,13.5 877.0,17.0 876.0,20.0 880.0,22.0 883.0,24.0 889.5,27.0 885.0,30.0 888.0,33.0 884.5,35.0 893.0,40.5 888.0,44.0 890.0,48.0 891.5,54.0 888.0,57.5 892.0,58.5 896.0,60.5 892.0,63.0 895.0,66.0 893.0,70.0 895.5,74.0 897.0,77.0 901.6,83.0 901.3,90.0 899.7,97.0 901.0,101.0 904.8,105.0 906.0,110.0 909.0,115.0 911.0,121.0 913.0,128.0 913.5,134.0 914.4,139.0 910.5,143.0 913.7,146.0 913.0,150.0 918.0,154.0 921.0,158.0 924.0,160.0 926.0,166.0 928.5,171.0 930.3,175.0 931.6,185.0 933.0,190.0 935.5,195.0 940.0,198.0"/>
<polyline fill="none" stroke="#22e022" stroke-width="1.1" stroke-linejoin="round" points="940.0,227.0 930.0,233.0 922.0,239.0 930.0,242.0 940.0,243.0"/>
<polyline fill="none" stroke="#22e022" stroke-width="1.1" stroke-linejoin="round" points="940.0,250.0 920.0,251.0 906.0,252.6 901.0,255.8 903.0,260.0 906.7,265.0 899.7,271.0 904.0,276.0 899.7,280.0 904.8,285.0 903.5,288.0 905.4,294.0 896.5,301.0 899.0,306.0 902.0,313.0 899.0,318.0 900.0,323.0 896.5,330.0 890.8,332.0 898.4,340.0 892.0,348.0 895.0,355.0 892.7,362.0 895.0,367.0 884.4,370.0 888.0,376.0 894.6,380.0 887.0,385.0 882.5,389.0 890.0,395.0 881.8,402.0 886.3,409.0 883.4,412.0 882.6,415.0 885.1,418.0 882.2,421.0 888.2,422.5 883.6,425.0 883.1,427.0 885.6,429.5 885.1,432.5 883.4,434.5 887.9,436.5 884.5,439.5 886.5,441.0 882.8,442.5 882.0,445.5 887.6,447.0 885.1,449.0 886.8,451.5 884.5,454.0 884.9,457.0 888.0,459.0 882.0,460.5 883.3,463.0 887.3,465.5 884.7,467.5 885.8,470.0 885.9,473.0 883.4,476.0 886.6,478.0 887.9,479.5 886.5,482.5 886.7,484.5 888.6,486.5 885.8,489.5 886.3,491.5 883.6,494.5 882.2,496.0 882.3,498.5 883.7,500.0 880.8,502.0 886.2,504.5 881.0,506.0 886.2,509.0 885.9,511.5 884.7,513.5 884.3,515.5 882.9,517.0 881.5,518.5 880.9,521.5 887.7,523.5 885.1,525.5 885.7,527.5 883.0,529.5 887.2,531.5 883.4,534.0 883.5,537.0 885.6,540.0 885.2,541.5 882.7,544.5 887.4,546.5 887.7,549.0 882.9,552.0 880.8,554.0 887.8,556.5 880.8,558.5 884.9,561.5 881.1,563.5 884.1,565.5 885.1,567.5 886.0,569.5 884.9,571.0 887.6,572.5 885.2,574.5 885.0,576.5 882.0,578.5 883.0,580.5 886.8,582.5 882.9,584.5 881.5,587.0 887.7,588.5 882.9,590.5 885.4,592.5 882.4,594.5 885.6,596.5 881.4,598.0 887.5,600.0 883.9,602.0 881.3,604.0 887.1,606.0 882.6,608.5 880.9,610.0 883.0,612.0 882.0,615.0 883.1,617.0 886.5,618.5 884.9,620.5 882.8,623.0 884.0,625.0 882.8,627.5 883.6,630.5 881.8,633.0 884.1,634.5 887.8,637.5 884.7,640.0 880.9,642.0 886.7,644.5 887.6,647.5 883.2,650.5 886.9,652.5 887.7,655.5 886.5,657.0 881.0,658.5 887.4,661.5 884.9,664.0 884.2,665.5 881.9,667.0 882.4,669.0 884.5,670.5 881.1,673.0 881.5,676.0 882.5,678.0 884.1,681.0 883.2,682.5 881.6,684.5 881.9,686.0 887.3,688.0 886.6,690.0 884.2,691.5 886.9,694.5 886.1,696.0 882.6,698.0 884.4,701.0 884.1,702.5 886.9,704.0 881.0,706.0 881.2,707.5 886.9,709.0 884.4,710.5 883.0,713.0 881.2,715.0 885.4,717.5 882.9,720.5 882.1,722.5 883.8,724.5 884.7,726.5 886.4,729.0 882.0,732.0 884.0,734.0 883.4,737.0 885.2,738.5 881.1,741.0 886.2,743.5 883.7,745.5 884.0,748.0 882.3,750.0 885.7,752.0 886.5,753.5 883.8,755.5 887.4,757.0 884.0,761.0 882.0,771.0 875.5,776.0 867.8,781.0"/>
<polyline fill="none" stroke="#22e022" stroke-width="1.1" points="936,782 938.5,778.5 940,777.5"/>
<rect x="940" y="0" width="1" height="783" fill="#fff"/>
<rect x="0" y="782" width="941" height="1" fill="#fff"/>
<rect x="0" y="0" width="941" height="1" fill="#fff"/>
<rect x="0" y="0" width="1" height="783" fill="#fff"/>
</svg></body></html>
